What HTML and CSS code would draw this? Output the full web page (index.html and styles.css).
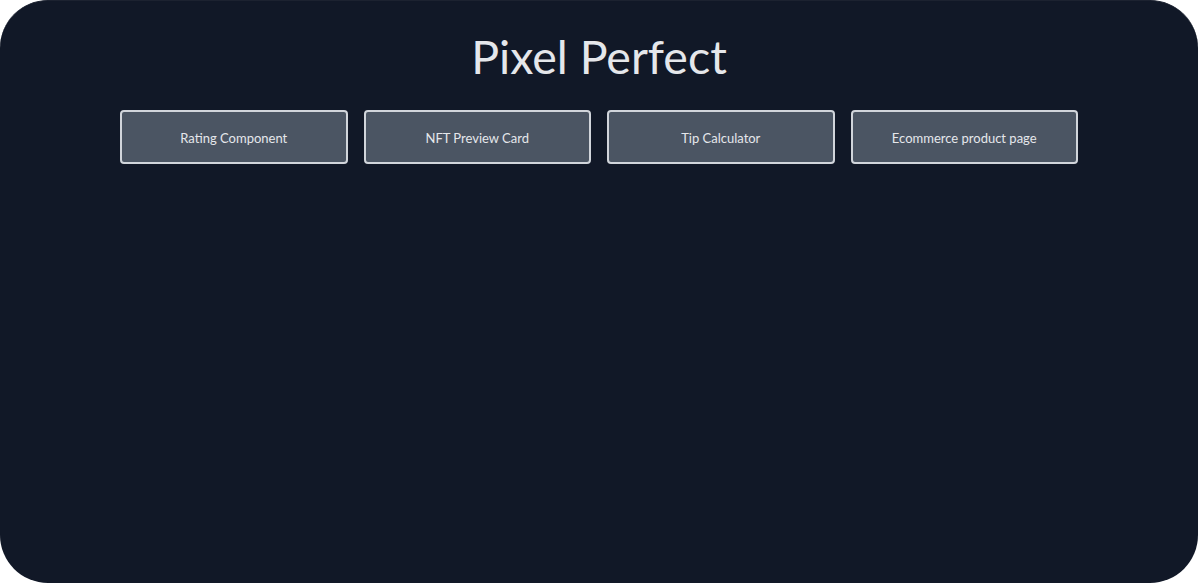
FILE: index.html
```html
<!DOCTYPE html>
<html lang="en">
<head>
<meta charset="utf-8">
<title>Pixel Perfect</title>
<link rel="stylesheet" href="styles.css">
</head>
<body>
<main class="app">
  <h1 class="title">Pixel Perfect</h1>
  <nav class="projects">
    <a class="project" href="#">Rating Component</a>
    <a class="project" href="#">NFT Preview Card</a>
    <a class="project" href="#">Tip Calculator</a>
    <a class="project" href="#">Ecommerce product page</a>
  </nav>
</main>
</body>
</html>
```
FILE: styles.css
```css
html, body {
  margin: 0;
  padding: 0;
  background: #ffffff;
  height: 100%;
}
.app {
  box-sizing: border-box;
  height: 583px;
  background: #111827;
  border-radius: 48px;
  border-top: 1px solid #1c2230;
  padding-top: 27px;
  font-family: "Lato", "Open Sans", sans-serif;
  color: #e5e7eb;
}
.title {
  margin: 0;
  text-align: center;
  font-weight: 400;
  font-size: 46.5px;
  line-height: 56px;
}
.projects {
  width: 958px;
  margin: 26px auto 0;
  display: grid;
  grid-template-columns: repeat(4, 1fr);
  gap: 16px;
}
.project {
  box-sizing: border-box;
  height: 54px;
  padding-top: 2px;
  display: flex;
  align-items: center;
  justify-content: center;
  background: #4b5563;
  border: 2px solid #d1d5db;
  border-radius: 4px;
  color: #e5e7eb;
  text-decoration: none;
  font-size: 13px;
}
```
